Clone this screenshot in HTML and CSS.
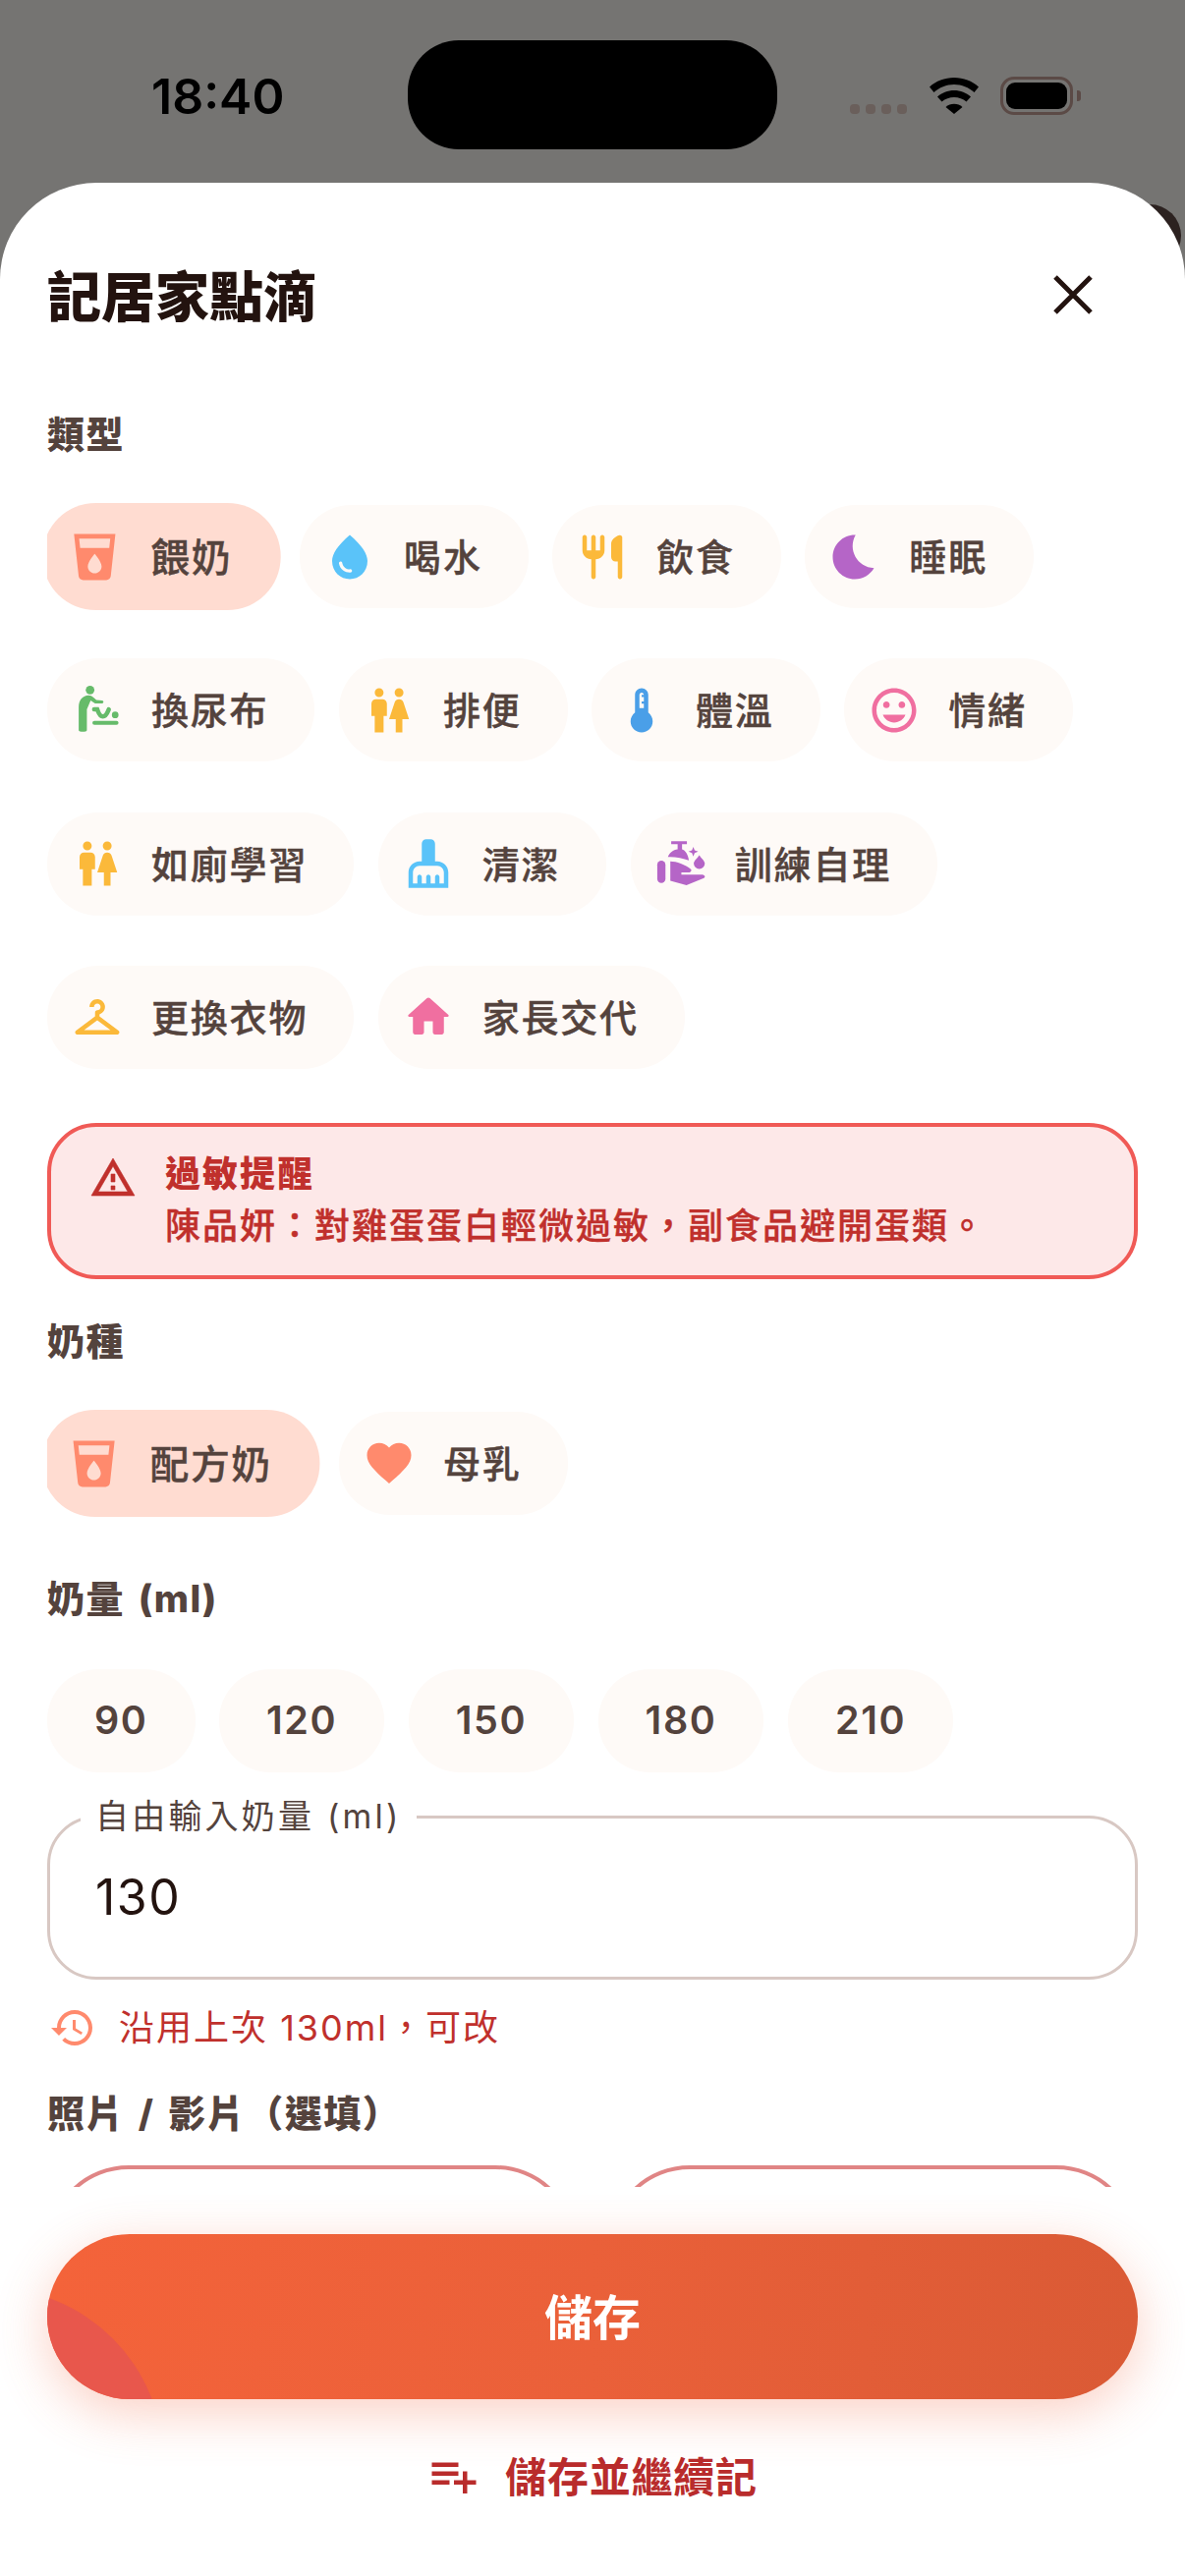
FILE: index.html
```html
<!DOCTYPE html>
<html lang="zh-Hant">
<head>
    <meta charset="UTF-8">
    <meta name="viewport" content="width=device-width, initial-scale=1.0">
    <title>記居家點滴</title>
    <link rel="stylesheet" href="styles.css">
</head>
<body>
<div class="screen">
    <!-- 狀態列 -->
    <div class="status-bar">
        <div class="status-time">18:40</div>
        <div class="island"></div>
        <div class="status-right">
            <div class="signal-dots"><i></i><i></i><i></i><i></i></div>
            <svg class="wifi" viewBox="0 0 50 37">
                <path d="M0 9.5C6.5 3.5 15.5 0 25 0s18.500 3.500 25 9.500l-4.500 5.500C40 10 33 7 25 7S10 10 4.500 15z"/>
                <path d="M8 19.500C12.500 15.500 18.500 13 25 13s12.500 2.500 17 6.500l-4.500 5C34 21.500 29.700 20 25 20s-9 1.500-12.500 4.500z"/>
                <path d="M16.500 30c2.300-2 5.300-3.200 8.500-3.200s6.200 1.200 8.500 3.200L25 37z"/>
            </svg>
            <div class="battery"><div class="battery-fill"></div></div>
            <div class="battery-nub"></div>
        </div>
    </div>
    <div class="behind-dot"></div>

    <div class="sheet">
        <div class="sheet-head">
            <h1 class="sheet-title">記居家點滴</h1>
            <svg class="close-icon" viewBox="0 0 40 40"><path d="M2 2l36 36M38 2L2 38"/></svg>
        </div>

        <div class="sheet-body">
            <h2 class="section-label first">類型</h2>
            <div class="chips">
                <div class="chip selected">
                    <svg class="chip-icon ic-coral" viewBox="0 0 24 24"><path d="M3 2l2.010 18.230C5.130 21.230 5.970 22 7 22h10c1.030 0 1.870-.770 1.990-1.770L21 2H3zm9 17c-1.660 0-3-1.340-3-3 0-2 3-5.400 3-5.400s3 3.400 3 5.400c0 1.660-1.340 3-3 3zm6.330-11H5.670l-.440-4h13.530l-.430 4z"/></svg>
                    <span>餵奶</span>
                </div>
                <div class="chip">
                    <svg class="chip-icon ic-sky" viewBox="0 0 24 24"><path d="M12 2c-5.330 4.550-8 8.480-8 11.800 0 4.980 3.800 8.200 8 8.200s8-3.220 8-8.200c0-3.320-2.670-7.250-8-11.800zM7.830 14c.370 0 .670.260.740.620.410 2.220 2.280 2.980 3.640 2.870.430-.020.790.320.790.750 0 .400-.320.730-.720.750-2.130.130-4.620-1.090-5.180-4.070-.080-.440.270-.920.730-.920z"/></svg>
                    <span>喝水</span>
                </div>
                <div class="chip">
                    <svg class="chip-icon ic-amber" viewBox="0 0 24 24"><path d="M16 6v6c0 1.100.900 2 2 2h1v7c0 .550.450 1 1 1s1-.450 1-1V3.130c0-.650-.610-1.130-1.240-.980C17.600 2.680 16 4.510 16 6zm-5 3H9V3c0-.550-.450-1-1-1s-1 .450-1 1v6H5V3c0-.550-.450-1-1-1s-1 .450-1 1v6c0 2.210 1.790 4 4 4v8c0 .550.450 1 1 1s1-.450 1-1v-8c2.210 0 4-1.790 4-4V3c0-.550-.450-1-1-1s-1 .450-1 1v6z"/></svg>
                    <span>飲食</span>
                </div>
                <div class="chip">
                    <svg class="chip-icon ic-purple" viewBox="0 0 24 24"><path d="M12.340 2.020C6.590 1.820 2 6.420 2 12c0 5.520 4.480 10 10 10 3.710 0 6.930-2.020 8.660-5.020-7.510-.250-12.090-8.430-8.320-14.960z"/></svg>
                    <span>睡眠</span>
                </div>
                <div class="chip">
                    <svg class="chip-icon ic-green" viewBox="0 0 24 24">
                        <circle cx="8.740" cy="2.800" r="1.950"/>
                        <path d="M3.600 10.500C3.600 7.400 5.500 5.200 8 5.200c1 0 1.600.400 2.200.900l1.400 1.200 2.600.300c.800.100.800 1.300 0 1.300H11L9 7.600l-1.700 3.900V21c0 .900-3.700.900-3.700 0z"/>
                        <path class="baby-line" d="M10.600 11.600h1.400c.600 1.500 1 3.200 2.500 3.200 1.500 0 2.100-1.700 2.700-3.200"/>
                        <circle cx="20.100" cy="14.100" r="1.500"/>
                        <rect x="9.800" y="16.800" width="11.800" height="1.800" rx=".9"/>
                    </svg>
                    <span>換尿布</span>
                </div>
                <div class="chip">
                    <svg class="chip-icon ic-amber" viewBox="0 0 24 24"><path d="M5.500 22v-7.500H4V9c0-1.100.900-2 2-2h3c1.100 0 2 .900 2 2v5.500H9.500V22h-4zM18 22v-6h3l-2.540-7.630C18.180 7.550 17.420 7 16.560 7h-.120c-.860 0-1.630.550-1.900 1.370L12 16h3v6h3zM7.500 6c1.110 0 2-.890 2-2s-.890-2-2-2-2 .890-2 2 .890 2 2 2zm9 0c1.110 0 2-.890 2-2s-.890-2-2-2-2 .890-2 2 .890 2 2 2z"/></svg>
                    <span>排便</span>
                </div>
                <div class="chip">
                    <svg class="chip-icon ic-blue" viewBox="0 0 24 24"><path d="M15 13V5c0-1.660-1.340-3-3-3S9 3.340 9 5v8c-1.210.910-2 2.370-2 4 0 2.760 2.240 5 5 5s5-2.240 5-5c0-1.630-.790-3.090-2-4zm-4-8c0-.550.450-1 1-1s1 .450 1 1h-1v1h1v2h-1v1h1v2h-2V5z"/></svg>
                    <span>體溫</span>
                </div>
                <div class="chip">
                    <svg class="chip-icon ic-pink" viewBox="0 0 24 24"><path d="M11.990 2C6.470 2 2 6.480 2 12s4.470 10 9.990 10C17.520 22 22 17.520 22 12S17.520 2 11.990 2zM12 20c-4.420 0-8-3.580-8-8s3.580-8 8-8 8 3.580 8 8-3.580 8-8 8zm3.500-9c.830 0 1.500-.670 1.500-1.500S16.330 8 15.500 8 14 8.670 14 9.500s.670 1.500 1.500 1.500zm-7 0c.830 0 1.500-.670 1.500-1.500S9.330 8 8.500 8 7 8.670 7 9.500 7.670 11 8.500 11zm3.500 6.500c2.330 0 4.310-1.460 5.110-3.500H6.890c.800 2.040 2.780 3.500 5.110 3.500z"/></svg>
                    <span>情緒</span>
                </div>
                <div class="chip">
                    <svg class="chip-icon ic-amber" viewBox="0 0 24 24"><path d="M5.500 22v-7.500H4V9c0-1.100.900-2 2-2h3c1.100 0 2 .900 2 2v5.500H9.500V22h-4zM18 22v-6h3l-2.540-7.630C18.180 7.550 17.420 7 16.560 7h-.120c-.860 0-1.630.550-1.900 1.370L12 16h3v6h3zM7.500 6c1.110 0 2-.890 2-2s-.890-2-2-2-2 .890-2 2 .890 2 2 2zm9 0c1.110 0 2-.890 2-2s-.890-2-2-2-2 .890-2 2 .890 2 2 2z"/></svg>
                    <span>如廁學習</span>
                </div>
                <div class="chip">
                    <svg class="chip-icon ic-sky" viewBox="0 0 24 24"><path d="M16 11h-1V3c0-1.100-.900-2-2-2h-2c-1.100 0-2 .900-2 2v8H8c-2.760 0-5 2.240-5 5v7h18v-7c0-2.760-2.240-5-5-5zm3 10h-2v-3c0-.550-.450-1-1-1s-1 .450-1 1v3h-2v-3c0-.550-.450-1-1-1s-1 .450-1 1v3H9v-3c0-.550-.450-1-1-1s-1 .450-1 1v3H5v-5c0-1.650 1.350-3 3-3h8c1.650 0 3 1.350 3 3v5z"/></svg>
                    <span>清潔</span>
                </div>
                <div class="chip">
                    <svg class="chip-icon ic-purple" viewBox="0 0 24 24">
                        <rect x="1.300" y="10.700" width="3.700" height="10.100" rx="1.850"/>
                        <path d="M7.200 11c2.800 0 6.800 1.500 9.300 3.500.500.500 0 1.500-1 1.500h-3.300v1H21c1.800 0 2.300 1 1.400 1.600l-7.900 3.200-7.300-2z"/>
                        <path d="M6.100 9c.700-2 2.400-3.300 4.400-3.500V3.200H7.600V1.900h7.100v1.300h-2.200v2.300c1.500.300 2.800 2.500 3.100 5.100C13 9.500 9 8.800 6.100 9z"/>
                        <path d="M17.600 4.400l.600 1.600 1.600.600-1.600.600-.600 1.600-.600-1.600-1.600-.600 1.600-.600z"/>
                        <path d="M20.300 8.200c.800 1.300 2.500 2.600 2.500 3.700a2.500 2.500 0 0 1-5 0c0-1.100 1.700-2.400 2.500-3.700z"/>
                    </svg>
                    <span>訓練自理</span>
                </div>
                <div class="chip">
                    <svg class="chip-icon ic-amber" viewBox="0 0 24 24"><path d="M21.600 18.200 13 11.750v-.910c1.650-.490 2.800-2.170 2.430-4.050-.260-1.310-1.300-2.400-2.610-2.700C10.540 3.570 8.500 5.300 8.500 7.500h2c0-.830.670-1.500 1.500-1.500s1.500.670 1.500 1.500c0 .840-.690 1.520-1.530 1.500-.540-.010-.970.450-.970.990v1.760L2.400 18.200c-.770.580-.360 1.800.600 1.800h18c.960 0 1.370-1.220.600-1.800zM6 18l6-4.500 6 4.500H6z"/></svg>
                    <span>更換衣物</span>
                </div>
                <div class="chip">
                    <svg class="chip-icon ic-pink" viewBox="0 0 24 24"><path d="M10 19v-5h4v5c0 .550.450 1 1 1h3c.550 0 1-.450 1-1v-7h1.700c.460 0 .680-.570.330-.870L12.670 3.600c-.380-.340-.960-.340-1.340 0l-8.360 7.530c-.340.300-.130.870.330.870H5v7c0 .550.450 1 1 1h3c.550 0 1-.450 1-1z"/></svg>
                    <span>家長交代</span>
                </div>
            </div>

            <div class="alert">
                <svg class="alert-icon" viewBox="0 0 24 24"><path d="M12 5.990L19.530 19H4.470L12 5.990M12 2L1 21h22L12 2zm1 14h-2v2h2v-2zm0-6h-2v4h2v-4z"/></svg>
                <div class="alert-text">
                    <div class="alert-title">過敏提醒</div>
                    <div class="alert-desc">陳品妍：對雞蛋蛋白輕微過敏，副食品避開蛋類。</div>
                </div>
            </div>

            <h2 class="section-label milk-type">奶種</h2>
            <div class="chips">
                <div class="chip selected">
                    <svg class="chip-icon ic-coral" viewBox="0 0 24 24"><path d="M3 2l2.010 18.230C5.130 21.230 5.970 22 7 22h10c1.030 0 1.870-.770 1.990-1.770L21 2H3zm9 17c-1.660 0-3-1.340-3-3 0-2 3-5.400 3-5.400s3 3.400 3 5.400c0 1.660-1.340 3-3 3zm6.330-11H5.670l-.440-4h13.530l-.430 4z"/></svg>
                    <span>配方奶</span>
                </div>
                <div class="chip">
                    <svg class="chip-icon ic-coral" viewBox="0 0 24 24"><path d="M12 21.350l-1.450-1.320C5.400 15.360 2 12.280 2 8.500 2 5.420 4.420 3 7.500 3c1.740 0 3.410.810 4.500 2.090C13.090 3.810 14.760 3 16.500 3 19.580 3 22 5.420 22 8.500c0 3.780-3.400 6.860-8.550 11.540L12 21.350z"/></svg>
                    <span>母乳</span>
                </div>
            </div>

            <h2 class="section-label milk-amount">奶量 (ml)</h2>
            <div class="chips">
                <div class="chip number">90</div>
                <div class="chip number">120</div>
                <div class="chip number">150</div>
                <div class="chip number">180</div>
                <div class="chip number">210</div>
            </div>

            <div class="field">
                <span class="field-label">自由輸入奶量 (ml)</span>
                <div class="field-value">130</div>
            </div>

            <div class="hint">
                <svg class="hint-icon" viewBox="0 0 24 24"><path d="M13 3c-4.970 0-9 4.030-9 9H1l3.890 3.890.070.140L9 12H6c0-3.870 3.130-7 7-7s7 3.130 7 7-3.130 7-7 7c-1.930 0-3.680-.790-4.940-2.060l-1.420 1.420C8.270 19.990 10.510 21 13 21c4.970 0 9-4.030 9-9s-4.030-9-9-9zm-1 5v5l4.280 2.540.720-1.210-3.500-2.080V8H12z"/></svg>
                <span>沿用上次 130ml，可改</span>
            </div>

            <h2 class="section-label media">照片 / 影片（選填）</h2>
            <div class="media-cards">
                <div class="media-card"></div>
                <div class="media-card"></div>
            </div>
        </div>

        <div class="sheet-foot">
            <div class="save-button"><span>儲存</span></div>
            <div class="save-more">
                <svg class="save-more-icon" viewBox="0 0 24 24"><path d="M14 10H2v2h12v-2zm0-4H2v2h12V6zm4 8v-4h-2v4h-4v2h4v4h2v-4h4v-2h-4zM2 16h8v-2H2v2z"/></svg>
                <span>儲存並繼續記</span>
            </div>
        </div>
    </div>
</div>
</body>
</html>
```

FILE: styles.css
```css
/* 基本 */
* {
    box-sizing: border-box;
}

body {
    margin: 0;
    font-family: "Inter", "Noto Sans CJK TC", sans-serif;
    color: #54433d;
}

.screen {
    position: relative;
    display: flex;
    flex-direction: column;
    width: 1206px;
    height: 2622px;
    overflow: hidden;
    background-color: #757472;
}

/* 狀態列 */
.status-bar {
    position: relative;
    display: flex;
    justify-content: space-between;
    flex: none;
    height: 186px;
    padding: 72px 106px 0 154px;
}

.status-time {
    font-size: 50px;
    line-height: 52px;
    font-weight: 600;
    color: #000;
}

.island {
    position: absolute;
    left: 415px;
    top: 41px;
    width: 376px;
    height: 111px;
    border-radius: 52px;
    background-color: #000;
}

.status-right {
    display: flex;
    align-items: flex-start;
    height: 40px;
    margin-top: 6px;
}

.signal-dots {
    display: flex;
    gap: 6px;
    margin-top: 28px;
    margin-right: 23px;
}

.signal-dots i {
    width: 10px;
    height: 10px;
    border-radius: 4px;
    background-color: #6a5f5b;
}

.wifi {
    width: 50px;
    height: 37px;
    margin-top: 1px;
    margin-right: 22px;
    fill: #000;
}

.battery {
    width: 74px;
    height: 39px;
    padding: 3px;
    border: 3px solid #5b4a46;
    border-radius: 14px;
}

.battery-fill {
    width: 100%;
    height: 100%;
    border-radius: 9px;
    background-color: #000;
}

.battery-nub {
    width: 4px;
    height: 11px;
    margin: 14px 0 0 4px;
    border-radius: 0 3px 3px 0;
    background-color: #5b4a46;
}

.behind-dot {
    position: absolute;
    left: 1138px;
    top: 208px;
    width: 64px;
    height: 64px;
    border-radius: 50%;
    background-color: #2c2220;
}

/* シート */
.sheet {
    position: relative;
    display: flex;
    flex-direction: column;
    flex: 1;
    min-height: 0;
    border-radius: 98px 98px 0 0;
    background-color: #fff;
}

.sheet-head {
    display: flex;
    justify-content: space-between;
    align-items: center;
    flex: none;
    padding: 81px 94px 0 48px;
}

.sheet-title {
    height: 66px;
    margin: 0;
    padding-top: 5px;
    font-size: 55px;
    line-height: 60px;
    font-weight: 900;
    color: #23130f;
}

.close-icon {
    width: 40px;
    height: 40px;
    fill: none;
    stroke: #23130f;
    stroke-width: 5;
}

.sheet-body {
    flex: none;
    height: 1893px;
    padding: 0 48px;
    overflow: hidden;
}

.section-label {
    margin: 0 0 47px;
    font-size: 38px;
    line-height: 50px;
    font-weight: 800;
    letter-spacing: 1.5px;
    word-spacing: 4px;
}

.section-label.first { margin-top: 84px; }
.section-label.milk-type { margin-top: 38px; }
.section-label.milk-amount { margin-top: 60px; }
.section-label.media { margin: 37px 0 28px; }

/* チップ */
.chips {
    display: flex;
    flex-wrap: wrap;
    gap: 51.3px 24.5px;
    overflow-x: clip;
}

.chip {
    display: flex;
    align-items: center;
    height: 105px;
    padding: 0 47px 0 24px;
    border-radius: 52px;
    background-color: #fefaf7;
    font-size: 38px;
    font-weight: 500;
    letter-spacing: 1.8px;
    -webkit-text-stroke: 0.4px #54433d;
}

.chip span {
    padding-bottom: 4px;
}

.chip.selected {
    background-color: #ffdcd1;
    transform: scale(1.04);
}

.chip.number {
    padding: 0 48px;
    font-size: 39.5px;
    font-weight: 600;
    letter-spacing: 1.6px;
    -webkit-text-stroke: 0;
}

.chip-icon {
    flex: none;
    width: 54px;
    height: 54px;
    margin-right: 28px;
}

.ic-coral { fill: #ff8a6d; }
.ic-sky { fill: #5ac3f9; }
.ic-amber { fill: #fbb93a; }
.ic-purple { fill: #b565c7; }
.ic-green { fill: #66bb6a; }
.ic-blue { fill: #4a9fe8; }
.ic-pink { fill: #f06fa0; }

.baby-line {
    fill: none;
    stroke: #66bb6a;
    stroke-width: 2;
    stroke-linecap: round;
}

/* 過敏提醒 */
.alert {
    display: flex;
    align-items: flex-start;
    height: 159px;
    margin-top: 55px;
    padding: 23px 40px 0 39px;
    border: 4px solid #f05a56;
    border-radius: 50px;
    background-color: #fde8e8;
    color: #c0302c;
}

.alert-icon {
    flex: none;
    width: 48px;
    height: 48px;
    margin: 5px 29px 0 0;
    fill: #c0302c;
    stroke: #c0302c;
    stroke-width: 0.3;
    stroke-linejoin: round;
}

.alert-title {
    font-size: 36px;
    line-height: 50px;
    font-weight: 800;
    letter-spacing: 2px;
}

.alert-desc {
    margin-top: 3px;
    font-size: 36px;
    line-height: 50px;
    font-weight: 500;
    letter-spacing: 2px;
    -webkit-text-stroke: 0.4px #c0302c;
}

/* 入力欄 */
.field {
    position: relative;
    display: flex;
    align-items: center;
    height: 167px;
    margin-top: 44px;
    padding: 0 46px;
    border: 3px solid #d8c8c3;
    border-radius: 50px;
}

.field-label {
    position: absolute;
    left: 31px;
    top: -24px;
    padding: 0 15px;
    background-color: #fff;
    font-size: 34px;
    line-height: 44px;
    letter-spacing: 3.2px;
}

.field-value {
    font-size: 50px;
    letter-spacing: 1.5px;
    color: #23130f;
}

.hint {
    display: flex;
    align-items: center;
    height: 50px;
    margin-top: 24px;
    font-size: 36px;
    letter-spacing: 2px;
    color: #c0302c;
}

.hint span {
    padding-bottom: 6px;
}

.hint-icon {
    flex: none;
    width: 48px;
    height: 48px;
    margin: 0 23px 0 2px;
    fill: #ff8a6d;
}

.media-cards {
    display: flex;
    justify-content: space-between;
}

.media-card {
    width: 539px;
    height: 300px;
    border: 4px solid #e08585;
    border-radius: 83px;
}

/* 下部ボタン */
.sheet-foot {
    position: relative;
    flex: 1;
    padding: 48px 48px 0;
    background-color: #fff;
}

.sheet-foot::before {
    content: "";
    position: absolute;
    left: 48px;
    right: 48px;
    top: 48px;
    height: 168px;
    border-radius: 84px;
    box-shadow: 0 14px 52px rgba(243, 98, 58, 0.3);
}

.save-button {
    position: relative;
    display: flex;
    justify-content: center;
    align-items: center;
    height: 168px;
    border-radius: 84px;
    overflow: hidden;
    background: linear-gradient(90deg, #f4633a 0%, #ea6039 50%, #da5a35 100%);
    font-size: 49px;
    font-weight: 700;
    color: #fff;
}

.save-button::before {
    content: "";
    position: absolute;
    left: -232px;
    top: 55px;
    width: 350px;
    height: 350px;
    border-radius: 50%;
    background-color: #e8574c;
}

.save-button span {
    position: relative;
    padding-bottom: 5px;
}

.save-more {
    display: flex;
    justify-content: center;
    align-items: center;
    height: 60px;
    margin-top: 48px;
    font-size: 42px;
    font-weight: 600;
    letter-spacing: 0.8px;
    color: #b92c2c;
}

.save-more span {
    padding-bottom: 4px;
}

.save-more-icon {
    flex: none;
    width: 54px;
    height: 54px;
    margin-right: 25px;
    fill: #b92c2c;
}
```
